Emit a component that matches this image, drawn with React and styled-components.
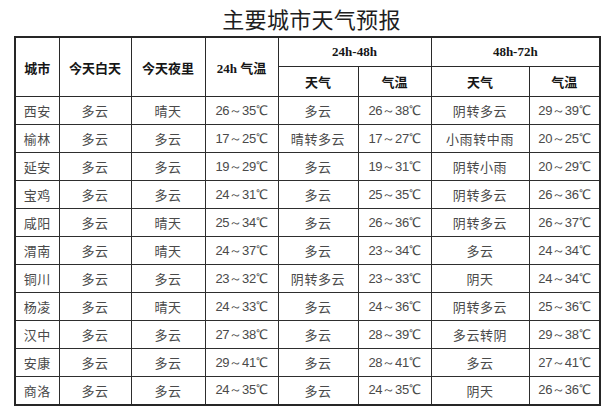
import React from "react";
import styled, { createGlobalStyle } from "styled-components";

const Global = createGlobalStyle`
  html, body { margin: 0; padding: 0; background: #ffffff; }
  body { width: 607px; height: 409px; overflow: hidden; }
`;

const Page = styled.div`
  display: flex;
  flex-direction: column;
  align-items: stretch;
  padding: 0 8px 0 14px;
`;

const Title = styled.h1`
  margin: 0;
  height: 36px;
  display: flex;
  align-items: center;
  justify-content: center;
  padding-left: 10px;
  font-family: "Noto Sans CJK SC", "Noto Sans", sans-serif;
  font-weight: 400;
  font-size: 22px;
  color: #1e1e1e;
  letter-spacing: 0.3px;
`;

const Table = styled.table`
  width: 585px;
  table-layout: fixed;
  border-collapse: collapse;
  border: 2px solid #262626;
`;

const HeadCell = styled.th`
  border: 1px solid #2a2a2a;
  padding: 0;
  height: ${(p) => p.$h || 28}px;
  text-align: center;
  vertical-align: middle;
  font-family: "Liberation Serif", "Noto Sans CJK SC", serif;
  font-weight: 700;
  font-size: 13px;
  color: #161616;
  white-space: nowrap;
`;

const Row = styled.tr`
  height: 28px;
`;

const Cell = styled.td`
  border: 1px solid #2e2e2e;
  padding: 0;
  text-align: center;
  vertical-align: middle;
  font-family: ${(p) =>
    p.$num
      ? `"Liberation Sans", Arial, sans-serif`
      : `"Noto Sans CJK SC", sans-serif`};
  font-size: 13px;
  font-weight: 400;
  color: #4a4a4a;
  letter-spacing: ${(p) => (p.$num ? "-0.3px" : "0.6px")};
  white-space: nowrap;
`;

const widths = [44, 72, 74, 73, 80, 73, 98, 71];

const rows = [
  ["西安", "多云", "晴天", "26～35℃", "多云", "26～38℃", "阴转多云", "29～39℃"],
  ["榆林", "多云", "多云", "17～25℃", "晴转多云", "17～27℃", "小雨转中雨", "20～25℃"],
  ["延安", "多云", "多云", "19～29℃", "多云", "19～31℃", "阴转小雨", "20～29℃"],
  ["宝鸡", "多云", "多云", "24～31℃", "多云", "25～35℃", "阴转多云", "26～36℃"],
  ["咸阳", "多云", "晴天", "25～34℃", "多云", "26～36℃", "阴转多云", "26～37℃"],
  ["渭南", "多云", "晴天", "24～37℃", "多云", "23～34℃", "多云", "24～34℃"],
  ["铜川", "多云", "多云", "23～32℃", "阴转多云", "23～33℃", "阴天", "24～34℃"],
  ["杨凌", "多云", "晴天", "24～33℃", "多云", "24～36℃", "阴转多云", "25～36℃"],
  ["汉中", "多云", "多云", "27～38℃", "多云", "28～39℃", "多云转阴", "29～38℃"],
  ["安康", "多云", "多云", "29～41℃", "多云", "28～41℃", "多云", "27～41℃"],
  ["商洛", "多云", "多云", "24～35℃", "多云", "24～35℃", "阴天", "26～36℃"],
];

const numCols = new Set([3, 5, 7]);

export default function App() {
  return (
    <>
      <Global />
      <Page>
        <Title>主要城市天气预报</Title>
        <Table>
          <colgroup>
            {widths.map((w, i) => (
              <col key={i} style={{ width: w }} />
            ))}
          </colgroup>
          <thead>
            <tr>
              <HeadCell rowSpan={2} $h={28}>城市</HeadCell>
              <HeadCell rowSpan={2}>今天白天</HeadCell>
              <HeadCell rowSpan={2}>今天夜里</HeadCell>
              <HeadCell rowSpan={2}>24h 气温</HeadCell>
              <HeadCell colSpan={2}>24h-48h</HeadCell>
              <HeadCell colSpan={2}>48h-72h</HeadCell>
            </tr>
            <tr>
              <HeadCell $h={29}>天气</HeadCell>
              <HeadCell $h={29}>气温</HeadCell>
              <HeadCell $h={29}>天气</HeadCell>
              <HeadCell $h={29}>气温</HeadCell>
            </tr>
          </thead>
          <tbody>
            {rows.map((r) => (
              <Row key={r[0]}>
                {r.map((c, i) => (
                  <Cell key={i} $num={numCols.has(i)}>
                    {c}
                  </Cell>
                ))}
              </Row>
            ))}
          </tbody>
        </Table>
      </Page>
    </>
  );
}
